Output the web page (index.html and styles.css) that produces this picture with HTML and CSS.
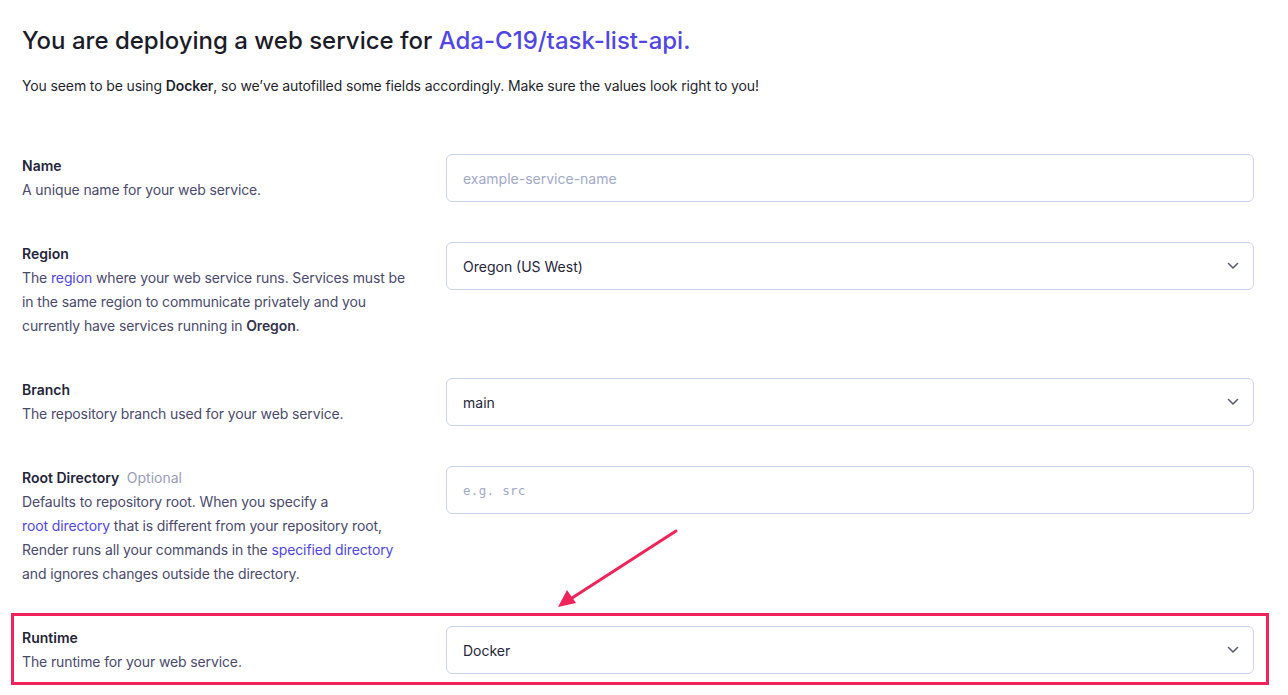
FILE: index.html
```html
<!DOCTYPE html>
<html>
<head>
<meta charset="utf-8">
<link rel="stylesheet" href="styles.css">
</head>
<body>
<div class="page">
  <h1 class="title">You are deploying a web service for <a class="repo">Ada-C19/task-list-api.</a></h1>
  <p class="intro">You seem to be using <b>Docker</b>, so we’ve autofilled some fields accordingly. Make sure the values look right to you!</p>

  <div class="form">
    <div class="row">
      <div class="info">
        <div class="label">Name</div>
        <div class="desc">A unique name for your web service.</div>
      </div>
      <div class="field"><span class="placeholder">example-service-name</span></div>
    </div>

    <div class="row">
      <div class="info">
        <div class="label">Region</div>
        <div class="desc">The <a class="link">region</a> where your web service runs. Services must be in the same region to communicate privately and you currently have services running in <b>Oregon</b>.</div>
      </div>
      <div class="field select"><span class="value">Oregon (US West)</span><svg class="chev" width="12" height="8" viewBox="0 0 12 8"><path d="M1.5 1.5 L6 6 L10.5 1.5" fill="none" stroke="#5b5b73" stroke-width="1.6" stroke-linecap="round" stroke-linejoin="round"/></svg></div>
    </div>

    <div class="row">
      <div class="info">
        <div class="label">Branch</div>
        <div class="desc">The repository branch used for your web service.</div>
      </div>
      <div class="field select"><span class="value">main</span><svg class="chev" width="12" height="8" viewBox="0 0 12 8"><path d="M1.5 1.5 L6 6 L10.5 1.5" fill="none" stroke="#5b5b73" stroke-width="1.6" stroke-linecap="round" stroke-linejoin="round"/></svg></div>
    </div>

    <div class="row">
      <div class="info">
        <div class="label">Root Directory <span class="optional">Optional</span></div>
        <div class="desc">Defaults to repository root. When you specify a <a class="link">root directory</a> that is different from your repository root, Render runs all your commands in the <a class="link">specified directory</a> and ignores changes outside the directory.</div>
      </div>
      <div class="field"><span class="placeholder mono">e.g. src</span></div>
    </div>

    <div class="row highlighted">
      <div class="info">
        <div class="label">Runtime</div>
        <div class="desc">The runtime for your web service.</div>
      </div>
      <div class="field select"><span class="value">Docker</span><svg class="chev" width="12" height="8" viewBox="0 0 12 8"><path d="M1.5 1.5 L6 6 L10.5 1.5" fill="none" stroke="#5b5b73" stroke-width="1.6" stroke-linecap="round" stroke-linejoin="round"/></svg></div>
      <div class="hl-box"></div>
    </div>
  </div>
</div>
<svg class="arrow" width="140" height="100" viewBox="540 520 140 100">
  <line x1="676" y1="531" x2="572" y2="598" stroke="#f0235a" stroke-width="3" stroke-linecap="round"/>
  <polygon points="558,607 567,590 576,603" fill="#f0235a"/>
</svg>
</body>
</html>
```
FILE: styles.css
```css
html, body {
  margin: 0;
  padding: 0;
  background: #ffffff;
}
body {
  font-family: Inter, "Noto Sans", "Liberation Sans", sans-serif;
  color: #1f1f2e;
  position: relative;
  width: 1288px;
  height: 695px;
  overflow: hidden;
}
.page {
  padding: 26px 34px 0 22px;
}
.title {
  margin: 0;
  font-size: 24px;
  line-height: 30px;
  font-weight: 500;
  color: #1c1c28;
  letter-spacing: 0;
}
.repo {
  color: #5046e5;
}
.intro {
  margin: 18px 0 0;
  font-size: 14px;
  line-height: 24px;
  color: #1f1f2e;
  letter-spacing: -0.12px;
}
.intro b {
  font-weight: 600;
}
.form {
  margin-top: 56px;
  display: flex;
  flex-direction: column;
  gap: 40px;
}
.row {
  display: flex;
  gap: 32px;
  align-items: flex-start;
  position: relative;
}
.info {
  width: 392px;
  flex: none;
}
.label {
  font-size: 14px;
  line-height: 24px;
  font-weight: 600;
  color: #25253a;
}
.optional {
  font-weight: 400;
  color: #9a9cb8;
  margin-left: 4px;
}
.desc {
  font-size: 14px;
  line-height: 24px;
  color: #4a4a6c;
  letter-spacing: -0.12px;
}
.desc b {
  font-weight: 600;
  color: #33334d;
}
.link {
  color: #5046e5;
  white-space: nowrap;
}
.field {
  flex: 1;
  height: 48px;
  box-sizing: border-box;
  border: 1px solid #c8d2ea;
  border-radius: 6px;
  padding: 0 16px;
  display: flex;
  align-items: center;
  font-size: 14px;
}
.placeholder {
  color: #a2a8c8;
}
.placeholder.mono {
  font-family: "DejaVu Sans Mono", "Liberation Mono", monospace;
  font-size: 12.5px;
  letter-spacing: 0.3px;
}
.value {
  color: #25253a;
  flex: 1;
}
.chev {
  margin-right: -2px;
}
.hl-box {
  position: absolute;
  left: -11px;
  top: -13px;
  width: 1258px;
  height: 72px;
  border: 3px solid #f0235a;
  box-sizing: border-box;
  pointer-events: none;
}
.arrow {
  position: absolute;
  left: 540px;
  top: 520px;
}
```
